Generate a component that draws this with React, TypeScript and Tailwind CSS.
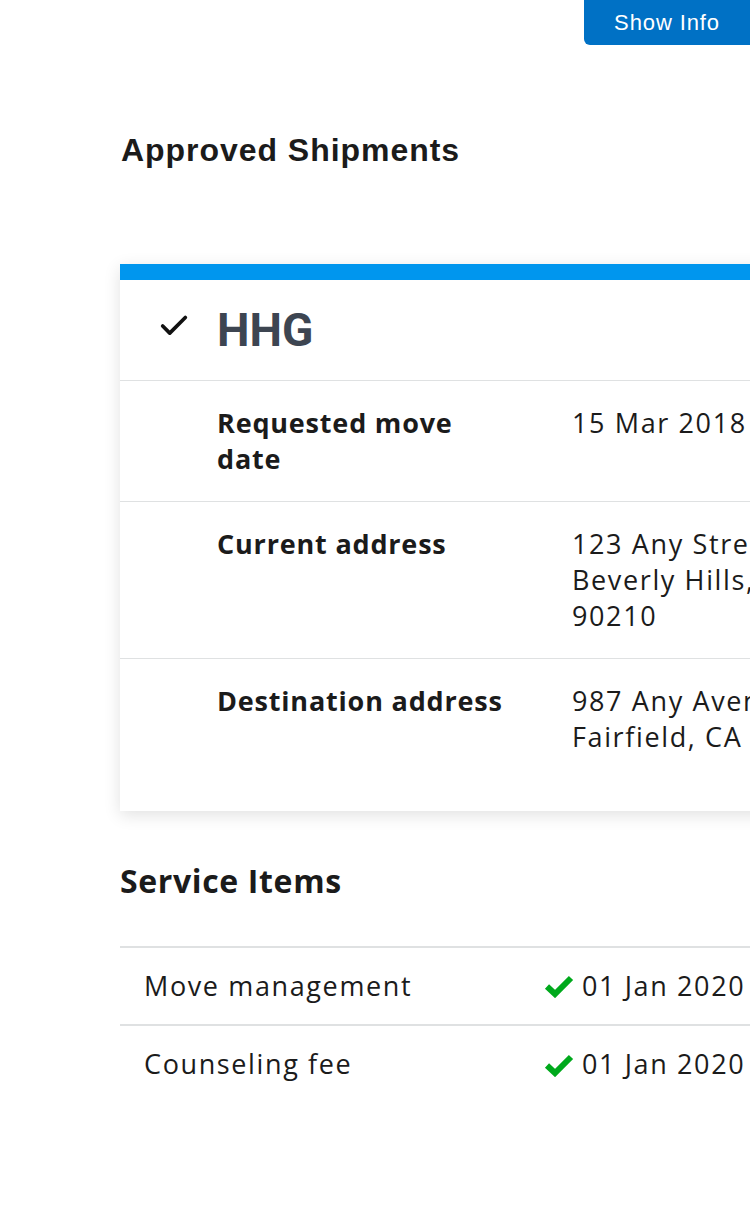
import { Check } from 'lucide-react'

const body = 'font-["Open_Sans","Liberation_Sans",sans-serif]'

const rows = [
  { label: 'Requested move date', value: ['15 Mar 2018'] },
  { label: 'Current address', value: ['123 Any Street', 'Beverly Hills, CA', '90210'] },
  { label: 'Destination address', value: ['987 Any Avenue', 'Fairfield, CA 94535'] },
]

const serviceItems = [
  { name: 'Move management', date: '01 Jan 2020' },
  { name: 'Counseling fee', date: '01 Jan 2020' },
]

function GreenCheck() {
  return (
    <svg width="30" height="24" viewBox="0 0 30 24" className="shrink-0">
      <path d="M3 12.5 L11 20 L27 4" fill="none" stroke="#00a91c" strokeWidth="6" strokeLinejoin="miter" />
    </svg>
  )
}

export default function App() {
  return (
    <div className={`relative h-[1224px] w-[750px] overflow-hidden bg-white text-[#1b1b1b] ${body}`}>
      <button
        type="button"
        className="absolute right-0 top-0 h-[45px] w-[166px] rounded-bl-md bg-[#0071c5] font-['Liberation_Sans',sans-serif] text-[22px] tracking-[0.04em] text-white"
      >
        Show Info
      </button>

      <div className="w-[1100px] pl-[120px] pt-[128px]">
        <h2 className="pl-px font-['Liberation_Sans',sans-serif] text-[32px] font-bold leading-[44px] tracking-[0.03em]">
          Approved Shipments
        </h2>

        <section className="mt-[92px] bg-white shadow-[0_4px_16px_rgba(0,0,0,0.12)]">
          <div className="h-4 bg-[#0096ee]" />
          <div className="flex h-[101px] items-center border-b border-[#dfe1e2]">
            <div className="-mt-2 flex w-[97px] justify-center pl-[10px]">
              <Check size={34} strokeWidth={2.6} color="#111" />
            </div>
            <h3 className="font-['Roboto',sans-serif] text-[46px] font-bold leading-none text-[#3d4551]">
              HHG
            </h3>
          </div>
          <div className="pb-8">
            {rows.map((r, i) => (
              <div
                key={r.label}
                className={`grid grid-cols-[97px_355px_1fr] py-6 text-[27px] leading-9 ${i < rows.length - 1 ? 'border-b border-[#dfe1e2]' : ''}`}
              >
                <div />
                <div className="pr-[50px] font-bold tracking-[0.03em]">{r.label}</div>
                <div className="tracking-[0.06em]">
                  {r.value.map((v) => (
                    <div key={v}>{v}</div>
                  ))}
                </div>
              </div>
            ))}
          </div>
        </section>

        <h2 className="mt-[48px] text-[32px] font-bold leading-[44px] tracking-[0.02em]">Service Items</h2>

        <table className="mt-[43px] w-full border-collapse text-[27px] tracking-[0.06em]">
          <tbody>
            {serviceItems.map((s) => (
              <tr key={s.name} className="h-[78px] border-t-2 border-[#dfe1e2]">
                <td className="w-[424px] pl-6">{s.name}</td>
                <td>
                  <span className="flex items-center gap-[8px]">
                    <GreenCheck />
                    {s.date}
                  </span>
                </td>
              </tr>
            ))}
          </tbody>
        </table>
      </div>
    </div>
  )
}
